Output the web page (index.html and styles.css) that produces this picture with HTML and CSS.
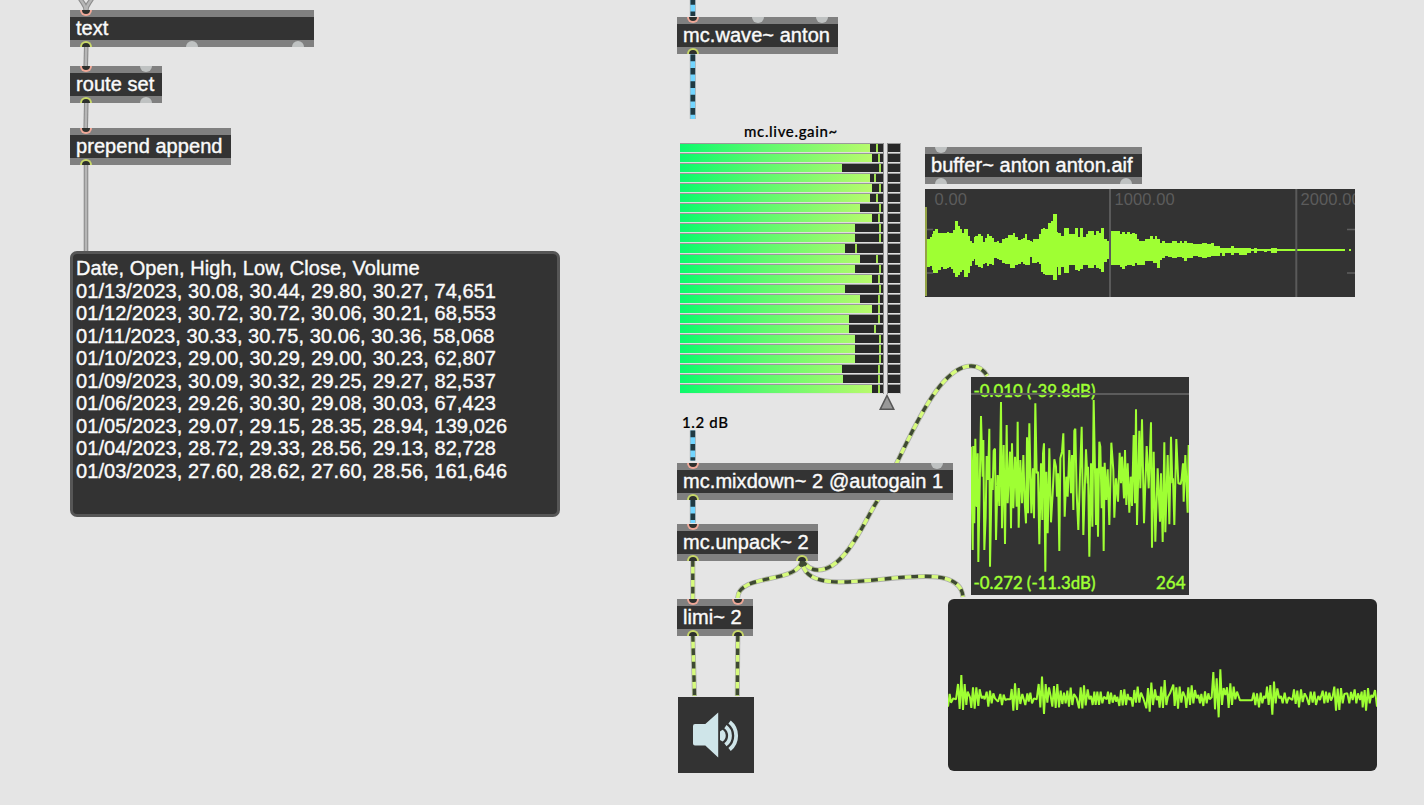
FILE: index.html
```html
<!DOCTYPE html>
<html lang="en">
<head>
  <meta charset="UTF-8">
  <meta name="viewport" content="width=device-width, initial-scale=1.0">
  <title>anton patcher</title>
  <link rel="stylesheet" href="styles.css">
</head>
<body>
<div class="patcher">

  <!-- Patch cords (below the boxes) -->
  <svg class="cords" width="1424" height="805" viewBox="0 0 1424 805">
    <defs>
      <path id="c1" d="M79 -4 C81 3 86 3 86 12"/>
      <path id="c2" d="M93 -4 C91 3 86 3 86 12"/>
      <path id="c3" d="M86.3 44 L85.7 68"/>
      <path id="c4" d="M86.3 100 L85.7 129"/>
      <path id="c5" d="M86 162 V252"/>
      <path id="m1" d="M692.8 -2 V16"/>
      <path id="m2" d="M692.8 54.5 V119"/>
      <path id="m3" d="M692.8 430.5 V460.5"/>
      <path id="m4" d="M692.8 500 V523"/>
      <path id="s1" d="M692.8 560 V600"/>
      <path id="s2" d="M802 560 C800 584 738 573 737.7 598"/>
      <path id="s3" d="M802 560 C806 566 811 570.3 818.5 570 C845 569 863 524 877.7 500 C903 457 934 366 971 366 C978 366 984 370 987.3 376"/>
      <path id="s4" d="M802 560 C804 614 959 545 963 597"/>
      <path id="s5" d="M692.8 635 L694.5 696"/>
      <path id="s6" d="M737.8 635 L737.3 696"/>
    </defs>
    <g class="cord-edge"><use href="#c1"/><use href="#c2"/><use href="#c3"/><use href="#c4"/><use href="#c5"/></g>
    <g class="cord"><use href="#c1"/><use href="#c2"/><use href="#c3"/><use href="#c4"/><use href="#c5"/></g>
    <g class="mc-edge"><use href="#m1"/><use href="#m2"/><use href="#m3"/><use href="#m4"/></g>
    <g class="mc-base"><use href="#m1"/><use href="#m2"/><use href="#m3"/><use href="#m4"/></g>
    <g class="mc-dash"><use href="#m1"/><use href="#m2"/><use href="#m3"/><use href="#m4"/></g>
    <g class="sig-edge"><use href="#s1"/><use href="#s2"/><use href="#s3"/><use href="#s4"/><use href="#s5"/><use href="#s6"/></g>
    <g class="sig-base"><use href="#s1"/><use href="#s2"/><use href="#s3"/><use href="#s4"/><use href="#s5"/><use href="#s6"/></g>
    <g class="sig-dash"><use href="#s1"/><use href="#s2"/><use href="#s3"/><use href="#s4"/><use href="#s5"/><use href="#s6"/></g>
  </svg>

  <!-- Object boxes -->
  <div class="box box-text">text
    <i class="port in on p1"></i><i class="port out on p1"></i><i class="port out p-a"></i><i class="port out p-b"></i>
  </div>
  <div class="box box-route">route set
    <i class="port in on p1"></i><i class="port in p-a"></i><i class="port out on p1"></i><i class="port out p-a"></i>
  </div>
  <div class="box box-prepend">prepend append
    <i class="port in on p1"></i><i class="port out on p1"></i>
  </div>
  <div class="box box-wave">mc.wave~ anton
    <i class="port in on p1"></i><i class="port in p-a"></i><i class="port in p-b"></i><i class="port out on p1"></i>
  </div>
  <div class="box box-buffer">buffer~ anton anton.aif
    <i class="port in p1"></i><i class="port out p1"></i><i class="port out p-a"></i>
  </div>
  <div class="box box-mixdown">mc.mixdown~ 2 @autogain 1
    <i class="port in on p1"></i><i class="port in p-a"></i><i class="port out on p1"></i>
  </div>
  <div class="box box-unpack">mc.unpack~ 2
    <i class="port in on p1"></i><i class="port out on p1"></i><i class="port out on p-a"></i>
  </div>
  <div class="box box-limi">limi~ 2
    <i class="port in on p1"></i><i class="port in on p-a"></i><i class="port out on p1"></i><i class="port out on p-a"></i>
  </div>

  <!-- Text editor with the quotes -->
  <div class="textedit">Date, Open, High, Low, Close, Volume
01/13/2023, 30.08, 30.44, 29.80, 30.27, 74,651
01/12/2023, 30.72, 30.72, 30.06, 30.21, 68,553
01/11/2023, 30.33, 30.75, 30.06, 30.36, 58,068
01/10/2023, 29.00, 30.29, 29.00, 30.23, 62,807
01/09/2023, 30.09, 30.32, 29.25, 29.27, 82,537
01/06/2023, 29.26, 30.30, 29.08, 30.03, 67,423
01/05/2023, 29.07, 29.15, 28.35, 28.94, 139,026
01/04/2023, 28.72, 29.33, 28.56, 29.13, 82,728
01/03/2023, 27.60, 28.62, 27.60, 28.56, 161,646</div>

  <!-- mc.live.gain~ -->
  <div class="gain">
    <div class="gain-name">mc.live.gain~</div>
    <div class="meters" id="meters"></div>
    <svg class="gain-handle" width="18" height="17" viewBox="0 0 18 17"><path d="M9 1.5 L15.8 15.3 H2.2 Z"/></svg>
    <div class="gain-value">1.2 dB</div>
  </div>

  <!-- waveform~ -->
  <svg class="waveform" width="430" height="108" viewBox="0 0 430 108">
    <path class="tick" d="M2 40.5 H8 M2 84 H8 M422 40.5 H430 M422 84 H430"/>
    <g class="ruler"><text x="9.5" y="16">0.00</text><text x="189.5" y="16">1000.00</text><text x="375.5" y="16">2000.00</text></g>
    <path class="wave" id="bufferWave"/>
    <rect class="cursor" x="0" y="18" width="2" height="89"/>
    <path class="grid" d="M185 0 V108 M371.3 0 V108"/>
  </svg>

  <!-- plot of the incoming signal -->
  <svg class="snapshot" width="218" height="218" viewBox="0 0 218 218">
    <text x="2.5" y="19.5" textLength="122" lengthAdjust="spacingAndGlyphs">-0.010 (-39.8dB)</text>
    <path class="level" d="M0 17 H218"/>
    <polyline class="trace" id="snapshotTrace"/>
    <text x="2.5" y="211.5" textLength="122" lengthAdjust="spacingAndGlyphs">-0.272 (-11.3dB)</text>
    <text x="214.5" y="211.5" text-anchor="end">264</text>
  </svg>

  <!-- scope~ -->
  <svg class="scope" width="429" height="172" viewBox="0 0 429 172">
    <polyline class="trace" id="scopeTrace"/>
  </svg>

  <!-- ezdac~ -->
  <div class="ezdac">
    <svg width="76" height="76" viewBox="0 0 76 76">
      <path class="horn" d="M17 27 H27.3 L40.2 15.5 V60.5 L27.3 48.5 H17 Q15 48.5 15 46.5 V29 Q15 27 17 27 Z"/>
      <path class="horn" d="M42 34.5 L44.5 32.8 A7 7 0 0 1 44.5 44.6 L42 43 Z"/>
      <path class="ring" d="M47.4 29.6 A11.3 11.3 0 0 1 47.4 47.8 M51.6 25 A17.6 17.6 0 0 1 51.6 52.4"/>
    </svg>
  </div>

</div>
<script src="script.js"></script>
</body>
</html>
```
FILE: styles.css
```css
* {
  margin: 0;
  padding: 0;
  box-sizing: border-box;
}

body {
  background: #e5e5e5;
  font-family: "Liberation Sans", Arial, sans-serif;
  overflow: hidden;
}

.patcher {
  position: relative;
  width: 1424px;
  height: 805px;
  overflow: hidden;
}

.patcher > * {
  position: absolute;
}

/* Patch cords */
.cords {
  left: 0;
  top: 0;
  fill: none;
}

.cord-edge { stroke: #8c8c8c; stroke-width: 4.6; }
.cord { stroke: #b6b6b6; stroke-width: 2.4; }
.mc-edge { stroke: #a9aeb0; stroke-width: 6; }
.mc-base { stroke: #72d5ff; stroke-width: 4.6; }
.mc-dash { stroke: #203a43; stroke-width: 4.6; stroke-dasharray: 6.7; }
.sig-edge { stroke: #adadad; stroke-width: 5; }
.sig-base { stroke: #d6fb7c; stroke-width: 3.4; }
.sig-dash { stroke: #3e4933; stroke-width: 3.4; stroke-dasharray: 6.7; }

/* Object boxes */
.box {
  height: 37px;
  padding-left: 6px;
  background: #333;
  border-top: 7px solid #808080;
  border-bottom: 7px solid #808080;
  color: #fafafa;
  font-size: 20px;
  line-height: 22px;
  letter-spacing: 0.06px;
  white-space: nowrap;
  -webkit-text-stroke: 0.4px #fafafa;
}

.box-text { left: 70px; top: 10px; width: 244px; }
.box-route { left: 70px; top: 66px; width: 92px; }
.box-prepend { left: 70px; top: 128px; width: 161px; }
.box-wave { left: 677px; top: 17px; width: 161px; }
.box-buffer { left: 925px; top: 147px; width: 217px; }
.box-mixdown { left: 677px; top: 463px; width: 276px; }
.box-unpack { left: 677px; top: 524px; width: 141px; }
.box-limi { left: 677px; top: 599px; width: 76px; }

/* Inlets and outlets */
.port {
  position: absolute;
  width: 12px;
  height: 6px;
  background: #bfc2c2;
}

.port.in {
  top: -7px;
  border-radius: 0 0 6px 6px;
}

.port.out {
  bottom: -7px;
  border-radius: 6px 6px 0 0;
}

.port.on {
  background: #2d302d;
  border: 2px solid #f0a898;
}

.port.on.in { border-top: none; }
.port.on.out { border-color: #c8d868; border-bottom: none; }

.p1 { left: 10px; }
.box-text .p-a { left: 116px; }
.box-text .p-b { left: 222px; }
.box-route .p-a { left: 70px; }
.box-wave .p-a { left: 75px; }
.box-wave .p-b { left: 139px; }
.box-buffer .p-a { left: 195px; }
.box-mixdown .p-a { left: 254px; }
.box-unpack .p-a { left: 119px; }
.box-limi .p-a { left: 55px; }

.textedit {
  left: 70px;
  top: 251px;
  width: 490px;
  height: 266px;
  padding: 3px;
  border: 3px solid #565656;
  border-radius: 7px;
  background: #333;
  color: #fafafa;
  font-size: 20px;
  line-height: 22.53px;
  letter-spacing: 0.065px;
  font-kerning: normal;
  white-space: pre;
  -webkit-text-stroke: 0.4px #fafafa;
}

/* Gain slider */
.gain {
  left: 680px;
  top: 122px;
  width: 221px;
  font-family: Lato, sans-serif;
  font-size: 15px;
  font-weight: 500;
  line-height: 18px;
  letter-spacing: 0.65px;
  color: #000;
  -webkit-text-stroke: 0.2px #000;
}

.gain-name {
  height: 21px;
  padding-left: 1px;
  text-align: center;
}

.meters {
  position: relative;
  height: 251px;
  display: flex;
  flex-direction: column;
}

.meters::after {
  content: "";
  position: absolute;
  left: 203px;
  top: 0;
  width: 3px;
  height: 251px;
  background: #e2e2e2;
  border-left: 1px solid #8a8a8a;
  border-right: 1px solid #8a8a8a;
}

.meter {
  position: relative;
  flex: 1;
  background: #282828;
  border: 1px solid #9a9a9a;
  border-bottom-color: #dedede;
  border-left: none;
}

.meter-fill {
  height: 100%;
  background: linear-gradient(to right, #0cfa6c, #60f96e 45%, #b8fa6c) 0 0 / 192px 100%;
}

.meter-peak {
  position: absolute;
  top: 0;
  width: 2px;
  height: 100%;
  background: #a0e050;
}

.gain-handle {
  display: block;
  margin-left: 198px;
  fill: #999;
  stroke: #575757;
  stroke-width: 1.5;
}

.gain-value {
  margin-top: 2px;
  padding-left: 2px;
}

/* Buffer display */
.waveform {
  left: 925px;
  top: 189px;
  background: #333;
}

.waveform .grid { stroke: #5a5a5a; stroke-width: 2; }
.waveform .tick { stroke: #5f5f5f; stroke-width: 1.6; }
.waveform .ruler { fill: #5c5c5c; font-size: 16.5px; letter-spacing: 0.1px; }
.waveform .wave { fill: #9fff33; }
.waveform .cursor { fill: #93a345; }

.snapshot {
  left: 971px;
  top: 377px;
  background: #333;
  fill: #9fff33;
  font-family: Lato, sans-serif;
  font-size: 17px;
  font-weight: 500;
}

.snapshot text { stroke: #9fff33; stroke-width: 0.35px; }
.snapshot .level { stroke: #5c5c5c; stroke-width: 2; }

.trace {
  fill: none;
  stroke: #9fff33;
  stroke-width: 2;
  stroke-linejoin: bevel;
}

.scope {
  left: 948px;
  top: 599px;
  background: #282828;
  border-radius: 6px;
}

/* Audio on/off */
.ezdac {
  left: 678px;
  top: 697px;
  width: 76px;
  height: 76px;
  background: #333;
}

.ezdac .horn { fill: #cfe5e9; }
.ezdac .ring { fill: none; stroke: #cfe5e9; stroke-width: 3.8; }
```
FILE: script.js
```js
// [level end, peak hold] for every channel, in px from the left
const channels = [
  [190, 196], [192, 198], [162, 199], [190, 194], [192, 199],
  [190, 196], [180, 199], [192, 198], [175, 199], [175, 199],
  [165, 175], [180, 196], [175, 199], [192, 198], [165, 199],
  [180, 198], [192, 198], [169, 198], [169, 194], [175, 199],
  [175, 199], [175, 199], [162, 198], [163, 198], [192, 198]
];

document.getElementById('meters').innerHTML = channels.map(([level, peak]) => `
  <div class="meter">
    <div class="meter-fill" style="width:${level}px"></div>
    <div class="meter-peak" style="left:${peak}px"></div>
  </div>`).join('');

// Buffer envelope: x, top, bottom (1/3 px units)
const envelope = [
  0,156,228, 6,150,235, 15,143,231, 21,135,243, 25,126,251, 31,120,251, 38,132,243, 47,132,233,
  55,132,239, 65,128,238, 71,132,233, 78,132,239, 84,123,253, 90,96,265, 99,111,258, 105,120,248,
  111,133,243, 117,120,265, 128,141,253, 135,156,231, 142,163,216, 147,145,211, 151,141,229, 160,135,235,
  168,141,237, 175,158,225, 181,148,223, 187,135,231, 193,141,225, 201,148,227, 208,158,208, 215,156,211,
  223,161,213, 232,150,221, 241,148,225, 248,138,225, 255,137,237, 263,133,238, 270,143,229, 278,153,225,
  287,149,219, 293,146,225, 300,135,229, 307,153,229, 315,156,203, 320,158,223, 325,150,223, 335,150,219,
  342,135,225, 347,120,248, 354,117,256, 360,119,258, 369,102,259, 378,96,258, 384,75,273, 395,129,233,
  400,133,258, 407,140,235, 417,117,251, 431,135,229, 440,136,227, 449,118,243, 459,143,245, 465,118,241,
  475,143,229, 483,135,228, 490,126,237, 507,137,229, 513,125,238, 522,133,241, 528,117,248, 537,149,219,
  545,156,211, 551,126,229, 585,135,233, 591,128,241, 601,136,231, 607,128,229, 615,135,228, 621,132,231,
  629,135,223, 635,149,229, 641,156,229, 660,150,215, 675,141,215, 683,150,221, 690,141,221, 695,149,236,
  705,161,213, 711,156,208, 720,162,200, 730,162,205, 741,156,208, 755,162,205, 765,156,205, 771,162,208,
  777,156,215, 787,162,207, 805,164,201, 820,164,203, 830,162,207, 845,165,203, 858,162,200, 867,171,200,
  885,177,193, 890,177,200, 899,177,193, 918,171,198, 927,177,191, 943,177,198, 955,177,197, 965,177,191,
  978,180,186, 987,177,191, 996,180,186, 1018,180,189, 1026,180,186, 1038,177,191, 1055,180,186
];

let d = '';
for (let i = 0; i < envelope.length; i += 3) {
  const next = i + 3 < envelope.length ? envelope[i + 3] : 1260;
  const [x, top, bottom] = [envelope[i], envelope[i + 1], envelope[i + 2]];
  d += `M${x / 3} ${top / 3}H${next / 3}V${bottom / 3}H${x / 3}Z`;
}
d += 'M423.5 60H426V62H423.5Z';
const wave = document.getElementById('bufferWave');
wave.setAttribute('d', d);
wave.setAttribute('shape-rendering', 'crispEdges');

// Draws x,y pairs given in 1/3 px units
function drawTrace(id, pts) {
  const out = [];
  for (let i = 0; i < pts.length; i += 2) {
    out.push((pts[i] / 3).toFixed(2) + ',' + (pts[i + 1] / 3).toFixed(2));
  }
  document.getElementById(id).setAttribute('points', out.join(' '));
}

drawTrace('snapshotTrace', [
  0,209, 5,519, 7,207, 10,439, 13,185, 16,387, 18,387, 20,229, 22,555, 30,117, 35,299, 37,189, 40,519, 44,419,
  47,237, 51,309, 55,155, 57,569, 62,304, 65,339, 68,221, 72,215, 75,489, 80,294, 85,387, 90,75, 93,454,
  96,300, 98,204, 102,501, 107,144, 110,379, 113,310, 117,224, 120,454, 123,199, 127,394, 132,239, 137,389, 140,134, 143,452,
  148,249, 153,379, 157,234, 161,374, 165,439, 168,181, 171,409, 175,139, 181,409, 186,274, 189,424, 193,79,
  197,289, 201,284, 205,502, 210,259, 214,429, 216,230, 219,199, 223,584, 226,284, 230,469, 235,214, 240,436, 245,349,
  250,247, 255,269, 258,359, 261,289, 265,522, 268,244, 273,224, 277,169, 281,419, 286,299, 290,359, 295,219,
  300,349, 303,234, 307,399, 310,161, 313,155, 317,349, 322,459, 327,294, 332,149, 337,474, 345,217, 350,319,
  351,269, 355,539, 360,259, 364,449, 368,69, 375,444, 378,274, 381,479, 385,194, 388,209, 392,394, 395,269,
  398,522, 401,257, 406,369, 410,277, 415,444, 421,197, 427,279, 430,422, 435,304, 441,374, 446,227, 450,319,
  453,239, 459,364, 462,219, 466,384, 470,259, 475,407, 479,299, 483,387, 488,174, 492,379, 495,97, 498,444,
  505,161, 508,334, 513,127, 519,439, 527,207, 533,334, 540,136, 543,512, 548,224, 553,494, 560,274, 567,434,
  570,289, 575,495, 580,196, 583,466, 590,234, 595,442, 600,179, 604,319, 606,304, 610,444, 616,186, 622,319,
  629,321, 632,304, 636,259, 638,374, 643,234, 650,407, 653,204
]);

drawTrace('scopeTrace', [
  0,323, 5,285, 9,311, 16,298, 24,301, 30,255, 35,330, 40,228, 45,333, 50,255, 55,318, 59,278, 66,295, 70,327,
  75,265, 80,329, 85,265, 91,321, 95,271, 101,298, 106,291, 110,301, 116,278, 121,323, 126,275, 131,313, 136,283,
  141,298, 150,308, 157,285, 162,318, 167,287, 172,303, 176,301, 187,301, 191,270, 196,335, 201,253, 207,333,
  212,267, 217,315, 223,285, 228,303, 232,318, 238,283, 242,308, 247,281, 252,313, 258,298, 266,301, 272,255,
  277,325, 282,233, 288,345, 293,255, 298,311, 303,265, 308,291, 313,323, 318,261, 323,327, 328,255, 333,325,
  338,275, 343,315, 348,281, 353,313, 358,275, 363,323, 368,266, 373,318, 378,285, 386,298, 393,328, 398,265,
  403,328, 408,259, 413,319, 419,271, 424,301, 429,291, 434,318, 439,278, 443,318, 448,278, 453,318, 458,278,
  463,313, 468,293, 476,301, 480,278, 484,315, 489,281, 494,311, 500,288, 504,308, 508,293, 514,321, 519,273,
  524,319, 529,271, 534,318, 539,285, 544,303, 549,295, 554,323, 559,273, 564,311, 569,263, 574,311, 579,281,
  586,298, 595,328, 600,267, 605,338, 610,251, 615,318, 621,271, 626,303, 631,291, 635,326, 640,263, 645,327,
  650,243, 655,318, 660,293, 666,283, 676,257, 680,321, 685,265, 690,329, 695,263, 700,311, 705,278, 711,293,
  715,327, 721,265, 726,318, 731,259, 736,313, 741,273, 746,298, 751,288, 756,313, 760,285, 766,321, 771,277,
  776,313, 781,283, 785,301, 791,295, 796,219, 801,331, 806,238, 812,355, 817,211, 822,318, 827,267, 832,288,
  837,265, 842,327, 847,253, 852,318, 857,263, 862,301, 867,278, 876,304, 912,304, 917,281, 922,318, 927,283,
  933,325, 938,281, 943,313, 948,291, 953,298, 957,263, 962,318, 967,258, 973,347, 978,248, 983,313, 988,268,
  994,298, 999,291, 1004,313, 1010,281, 1016,313, 1022,295, 1033,303, 1038,271, 1043,315, 1048,275, 1053,325,
  1059,271, 1064,309, 1070,283, 1076,295, 1083,318, 1088,278, 1094,311, 1099,278, 1104,318, 1111,291, 1116,303,
  1124,275, 1129,313, 1134,278, 1139,311, 1144,281, 1149,305, 1154,293, 1159,263, 1164,335, 1169,269, 1174,333,
  1179,267, 1184,313, 1189,285, 1198,283, 1204,313, 1209,279, 1214,303, 1220,271, 1225,313, 1230,283, 1236,303,
  1241,278, 1244,325, 1250,273, 1254,335, 1260,267, 1265,313, 1270,288, 1275,295, 1281,273, 1287,323
]);
```
